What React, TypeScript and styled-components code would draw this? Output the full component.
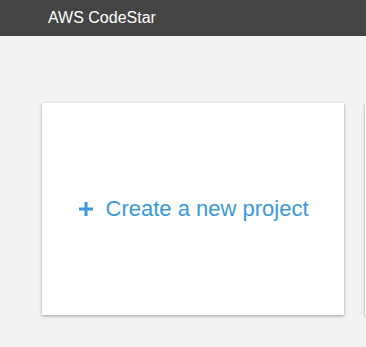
import React from "react";
import styled, { createGlobalStyle } from "styled-components";

const Global = createGlobalStyle`
  html, body { margin: 0; padding: 0; }
  body {
    background: #f2f3f3;
    font-family: "Liberation Sans", Arial, Helvetica, sans-serif;
    overflow: hidden;
  }
`;

const Page = styled.div`
  width: 366px;
  height: 347px;
  display: flex;
  flex-direction: column;
  background: #f2f3f3;
  overflow: hidden;
`;

const Header = styled.header`
  height: 36px;
  flex-shrink: 0;
  background: #444444;
  display: flex;
  align-items: center;
  padding-left: 48px;
  color: #ffffff;
  font-size: 16px;
  line-height: 1;
  padding-bottom: 1px;
  box-sizing: border-box;
`;

const Cards = styled.div`
  display: flex;
  gap: 21px;
  padding: 67px 0 0 42px;
`;

const Card = styled.div`
  flex-shrink: 0;
  width: 302px;
  height: 212px;
  background: #ffffff;
  box-shadow: 0 1px 3px rgba(0, 0, 0, 0.35);
  display: flex;
  align-items: center;
  justify-content: center;
`;

const CreateLink = styled.a`
  display: flex;
  align-items: center;
  gap: 13px;
  color: #3a99d8;
  font-size: 22px;
  line-height: 1;
  text-decoration: none;
  cursor: pointer;
  margin-top: 0px;
  margin-left: 1px;
`;

const PlusIcon = () => (
  <svg width="14" height="14" viewBox="0 0 14 14" aria-hidden="true">
    <rect x="5.5" y="0" width="3" height="14" fill="#3a99d8" />
    <rect x="0" y="5.5" width="14" height="3" fill="#3a99d8" />
  </svg>
);

export default function App() {
  return (
    <>
      <Global />
      <Page>
        <Header>AWS CodeStar</Header>
        <Cards>
          <Card>
            <CreateLink>
              <PlusIcon />
              <span>Create a new project</span>
            </CreateLink>
          </Card>
          <Card />
        </Cards>
      </Page>
    </>
  );
}
